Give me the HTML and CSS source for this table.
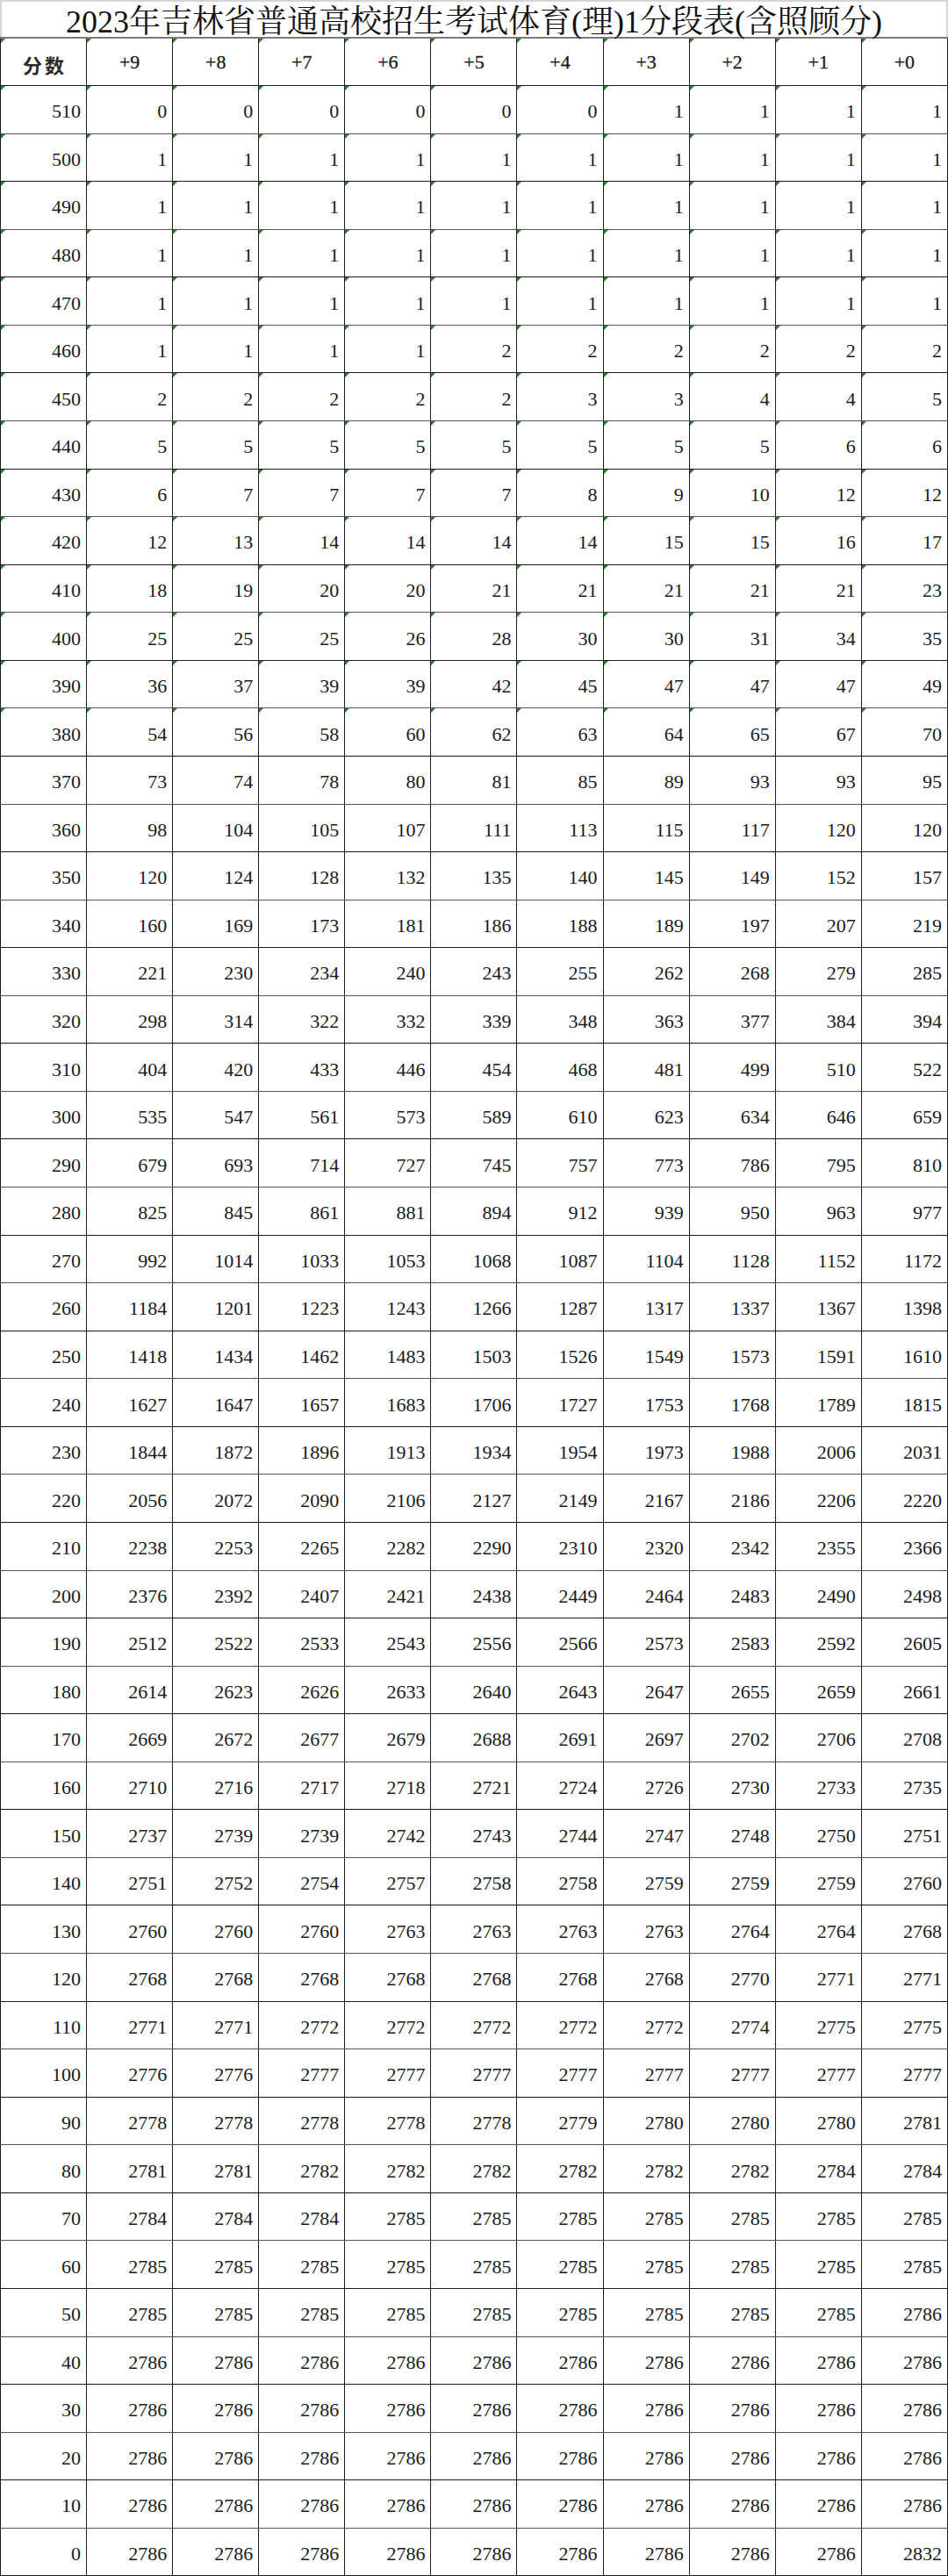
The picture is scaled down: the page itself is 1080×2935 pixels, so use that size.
FILE: index.html
```html
<!DOCTYPE html>
<html lang="zh-CN">
<head>
<meta charset="utf-8">
<title>2023年吉林省普通高校招生考试体育(理)1分段表(含照顾分)</title>
<link rel="stylesheet" href="styles.css">
</head>
<body>
<div class="sheet">
<div class="title">2023年吉林省普通高校招生考试体育(理)1分段表(含照顾分)</div>
<table class="grid">
<thead>
<tr class="flag"><th class="cn">分数</th><th>+9</th><th>+8</th><th>+7</th><th>+6</th><th>+5</th><th>+4</th><th>+3</th><th>+2</th><th>+1</th><th>+0</th></tr>
</thead>
<tbody>
<tr class="flag"><td>510</td><td>0</td><td>0</td><td>0</td><td>0</td><td>0</td><td>0</td><td>1</td><td>1</td><td>1</td><td>1</td></tr>
<tr class="flag"><td>500</td><td>1</td><td>1</td><td>1</td><td>1</td><td>1</td><td>1</td><td>1</td><td>1</td><td>1</td><td>1</td></tr>
<tr class="flag"><td>490</td><td>1</td><td>1</td><td>1</td><td>1</td><td>1</td><td>1</td><td>1</td><td>1</td><td>1</td><td>1</td></tr>
<tr class="flag"><td>480</td><td>1</td><td>1</td><td>1</td><td>1</td><td>1</td><td>1</td><td>1</td><td>1</td><td>1</td><td>1</td></tr>
<tr class="flag"><td>470</td><td>1</td><td>1</td><td>1</td><td>1</td><td>1</td><td>1</td><td>1</td><td>1</td><td>1</td><td>1</td></tr>
<tr class="flag"><td>460</td><td>1</td><td>1</td><td>1</td><td>1</td><td>2</td><td>2</td><td>2</td><td>2</td><td>2</td><td>2</td></tr>
<tr class="flag"><td>450</td><td>2</td><td>2</td><td>2</td><td>2</td><td>2</td><td>3</td><td>3</td><td>4</td><td>4</td><td>5</td></tr>
<tr class="flag"><td>440</td><td>5</td><td>5</td><td>5</td><td>5</td><td>5</td><td>5</td><td>5</td><td>5</td><td>6</td><td>6</td></tr>
<tr class="flag"><td>430</td><td>6</td><td>7</td><td>7</td><td>7</td><td>7</td><td>8</td><td>9</td><td>10</td><td>12</td><td>12</td></tr>
<tr class="flag"><td>420</td><td>12</td><td>13</td><td>14</td><td>14</td><td>14</td><td>14</td><td>15</td><td>15</td><td>16</td><td>17</td></tr>
<tr class="flag"><td>410</td><td>18</td><td>19</td><td>20</td><td>20</td><td>21</td><td>21</td><td>21</td><td>21</td><td>21</td><td>23</td></tr>
<tr class="flag"><td>400</td><td>25</td><td>25</td><td>25</td><td>26</td><td>28</td><td>30</td><td>30</td><td>31</td><td>34</td><td>35</td></tr>
<tr class="flag"><td>390</td><td>36</td><td>37</td><td>39</td><td>39</td><td>42</td><td>45</td><td>47</td><td>47</td><td>47</td><td>49</td></tr>
<tr class="flag"><td>380</td><td>54</td><td>56</td><td>58</td><td>60</td><td>62</td><td>63</td><td>64</td><td>65</td><td>67</td><td>70</td></tr>
<tr><td>370</td><td>73</td><td>74</td><td>78</td><td>80</td><td>81</td><td>85</td><td>89</td><td>93</td><td>93</td><td>95</td></tr>
<tr><td>360</td><td>98</td><td>104</td><td>105</td><td>107</td><td>111</td><td>113</td><td>115</td><td>117</td><td>120</td><td>120</td></tr>
<tr><td>350</td><td>120</td><td>124</td><td>128</td><td>132</td><td>135</td><td>140</td><td>145</td><td>149</td><td>152</td><td>157</td></tr>
<tr><td>340</td><td>160</td><td>169</td><td>173</td><td>181</td><td>186</td><td>188</td><td>189</td><td>197</td><td>207</td><td>219</td></tr>
<tr><td>330</td><td>221</td><td>230</td><td>234</td><td>240</td><td>243</td><td>255</td><td>262</td><td>268</td><td>279</td><td>285</td></tr>
<tr><td>320</td><td>298</td><td>314</td><td>322</td><td>332</td><td>339</td><td>348</td><td>363</td><td>377</td><td>384</td><td>394</td></tr>
<tr><td>310</td><td>404</td><td>420</td><td>433</td><td>446</td><td>454</td><td>468</td><td>481</td><td>499</td><td>510</td><td>522</td></tr>
<tr><td>300</td><td>535</td><td>547</td><td>561</td><td>573</td><td>589</td><td>610</td><td>623</td><td>634</td><td>646</td><td>659</td></tr>
<tr><td>290</td><td>679</td><td>693</td><td>714</td><td>727</td><td>745</td><td>757</td><td>773</td><td>786</td><td>795</td><td>810</td></tr>
<tr><td>280</td><td>825</td><td>845</td><td>861</td><td>881</td><td>894</td><td>912</td><td>939</td><td>950</td><td>963</td><td>977</td></tr>
<tr><td>270</td><td>992</td><td>1014</td><td>1033</td><td>1053</td><td>1068</td><td>1087</td><td>1104</td><td>1128</td><td>1152</td><td>1172</td></tr>
<tr><td>260</td><td>1184</td><td>1201</td><td>1223</td><td>1243</td><td>1266</td><td>1287</td><td>1317</td><td>1337</td><td>1367</td><td>1398</td></tr>
<tr><td>250</td><td>1418</td><td>1434</td><td>1462</td><td>1483</td><td>1503</td><td>1526</td><td>1549</td><td>1573</td><td>1591</td><td>1610</td></tr>
<tr><td>240</td><td>1627</td><td>1647</td><td>1657</td><td>1683</td><td>1706</td><td>1727</td><td>1753</td><td>1768</td><td>1789</td><td>1815</td></tr>
<tr><td>230</td><td>1844</td><td>1872</td><td>1896</td><td>1913</td><td>1934</td><td>1954</td><td>1973</td><td>1988</td><td>2006</td><td>2031</td></tr>
<tr><td>220</td><td>2056</td><td>2072</td><td>2090</td><td>2106</td><td>2127</td><td>2149</td><td>2167</td><td>2186</td><td>2206</td><td>2220</td></tr>
<tr><td>210</td><td>2238</td><td>2253</td><td>2265</td><td>2282</td><td>2290</td><td>2310</td><td>2320</td><td>2342</td><td>2355</td><td>2366</td></tr>
<tr><td>200</td><td>2376</td><td>2392</td><td>2407</td><td>2421</td><td>2438</td><td>2449</td><td>2464</td><td>2483</td><td>2490</td><td>2498</td></tr>
<tr><td>190</td><td>2512</td><td>2522</td><td>2533</td><td>2543</td><td>2556</td><td>2566</td><td>2573</td><td>2583</td><td>2592</td><td>2605</td></tr>
<tr><td>180</td><td>2614</td><td>2623</td><td>2626</td><td>2633</td><td>2640</td><td>2643</td><td>2647</td><td>2655</td><td>2659</td><td>2661</td></tr>
<tr><td>170</td><td>2669</td><td>2672</td><td>2677</td><td>2679</td><td>2688</td><td>2691</td><td>2697</td><td>2702</td><td>2706</td><td>2708</td></tr>
<tr><td>160</td><td>2710</td><td>2716</td><td>2717</td><td>2718</td><td>2721</td><td>2724</td><td>2726</td><td>2730</td><td>2733</td><td>2735</td></tr>
<tr><td>150</td><td>2737</td><td>2739</td><td>2739</td><td>2742</td><td>2743</td><td>2744</td><td>2747</td><td>2748</td><td>2750</td><td>2751</td></tr>
<tr><td>140</td><td>2751</td><td>2752</td><td>2754</td><td>2757</td><td>2758</td><td>2758</td><td>2759</td><td>2759</td><td>2759</td><td>2760</td></tr>
<tr><td>130</td><td>2760</td><td>2760</td><td>2760</td><td>2763</td><td>2763</td><td>2763</td><td>2763</td><td>2764</td><td>2764</td><td>2768</td></tr>
<tr><td>120</td><td>2768</td><td>2768</td><td>2768</td><td>2768</td><td>2768</td><td>2768</td><td>2768</td><td>2770</td><td>2771</td><td>2771</td></tr>
<tr><td>110</td><td>2771</td><td>2771</td><td>2772</td><td>2772</td><td>2772</td><td>2772</td><td>2772</td><td>2774</td><td>2775</td><td>2775</td></tr>
<tr><td>100</td><td>2776</td><td>2776</td><td>2777</td><td>2777</td><td>2777</td><td>2777</td><td>2777</td><td>2777</td><td>2777</td><td>2777</td></tr>
<tr><td>90</td><td>2778</td><td>2778</td><td>2778</td><td>2778</td><td>2778</td><td>2779</td><td>2780</td><td>2780</td><td>2780</td><td>2781</td></tr>
<tr><td>80</td><td>2781</td><td>2781</td><td>2782</td><td>2782</td><td>2782</td><td>2782</td><td>2782</td><td>2782</td><td>2784</td><td>2784</td></tr>
<tr><td>70</td><td>2784</td><td>2784</td><td>2784</td><td>2785</td><td>2785</td><td>2785</td><td>2785</td><td>2785</td><td>2785</td><td>2785</td></tr>
<tr><td>60</td><td>2785</td><td>2785</td><td>2785</td><td>2785</td><td>2785</td><td>2785</td><td>2785</td><td>2785</td><td>2785</td><td>2785</td></tr>
<tr><td>50</td><td>2785</td><td>2785</td><td>2785</td><td>2785</td><td>2785</td><td>2785</td><td>2785</td><td>2785</td><td>2785</td><td>2786</td></tr>
<tr><td>40</td><td>2786</td><td>2786</td><td>2786</td><td>2786</td><td>2786</td><td>2786</td><td>2786</td><td>2786</td><td>2786</td><td>2786</td></tr>
<tr><td>30</td><td>2786</td><td>2786</td><td>2786</td><td>2786</td><td>2786</td><td>2786</td><td>2786</td><td>2786</td><td>2786</td><td>2786</td></tr>
<tr><td>20</td><td>2786</td><td>2786</td><td>2786</td><td>2786</td><td>2786</td><td>2786</td><td>2786</td><td>2786</td><td>2786</td><td>2786</td></tr>
<tr><td>10</td><td>2786</td><td>2786</td><td>2786</td><td>2786</td><td>2786</td><td>2786</td><td>2786</td><td>2786</td><td>2786</td><td>2786</td></tr>
<tr><td>0</td><td>2786</td><td>2786</td><td>2786</td><td>2786</td><td>2786</td><td>2786</td><td>2786</td><td>2786</td><td>2786</td><td>2832</td></tr>
</tbody>
</table>
</div>
</body>
</html>
```

FILE: styles.css
```css
html, body {
  margin: 0;
  padding: 0;
  background: #ffffff;
}

.sheet {
  width: 1080px;
  font-family: "Liberation Serif", "Noto Serif CJK SC", "Noto Sans CJK SC", serif;
  color: #1a1a1a;
}

.title {
  height: 42px;
  box-sizing: border-box;
  border-top: 2px solid #d4d4d4;
  border-left: 2px solid #d4d4d4;
  border-right: 2px solid #d4d4d4;
  display: flex;
  align-items: center;
  justify-content: center;
  font-size: 36px;
  line-height: 1;
  padding-top: 6px;
  color: #111;
  white-space: nowrap;
}

.grid {
  width: 1080px;
  table-layout: fixed;
  border-collapse: collapse;
  border-top: 2px solid #7a7a7a;
}

.grid th,
.grid td {
  height: 54.57px;
  box-sizing: border-box;
  padding: 0 6px 0 0;
  border: 1px solid #1c1c1c;
  font-size: 22px;
  line-height: 1;
  font-weight: normal;
  position: relative;
  vertical-align: middle;
  overflow: hidden;
}

.grid tbody tr:nth-child(odd) td {
  border-bottom-color: #555;
}

.grid th {
  text-align: center;
  padding: 0;
  color: #1a1a1a;
  font-size: 22px;
  -webkit-text-stroke: 0.3px #1a1a1a;
}

.grid th.cn {
  font-family: "Noto Sans CJK SC", sans-serif;
  font-weight: 700;
  font-size: 22px;
  letter-spacing: 3px;
  padding-left: 3px;
  padding-top: 4px;
  color: #2a2a2a;
  -webkit-text-stroke: 0;
}

.grid td {
  text-align: right;
  padding-top: 5px;
}

.grid tr.flag th::before,
.grid tr.flag td::before {
  content: "";
  position: absolute;
  top: 0;
  left: 0;
  width: 0;
  height: 0;
  border-top: 5px solid #2f7d2a;
  border-right: 5px solid transparent;
}
```
